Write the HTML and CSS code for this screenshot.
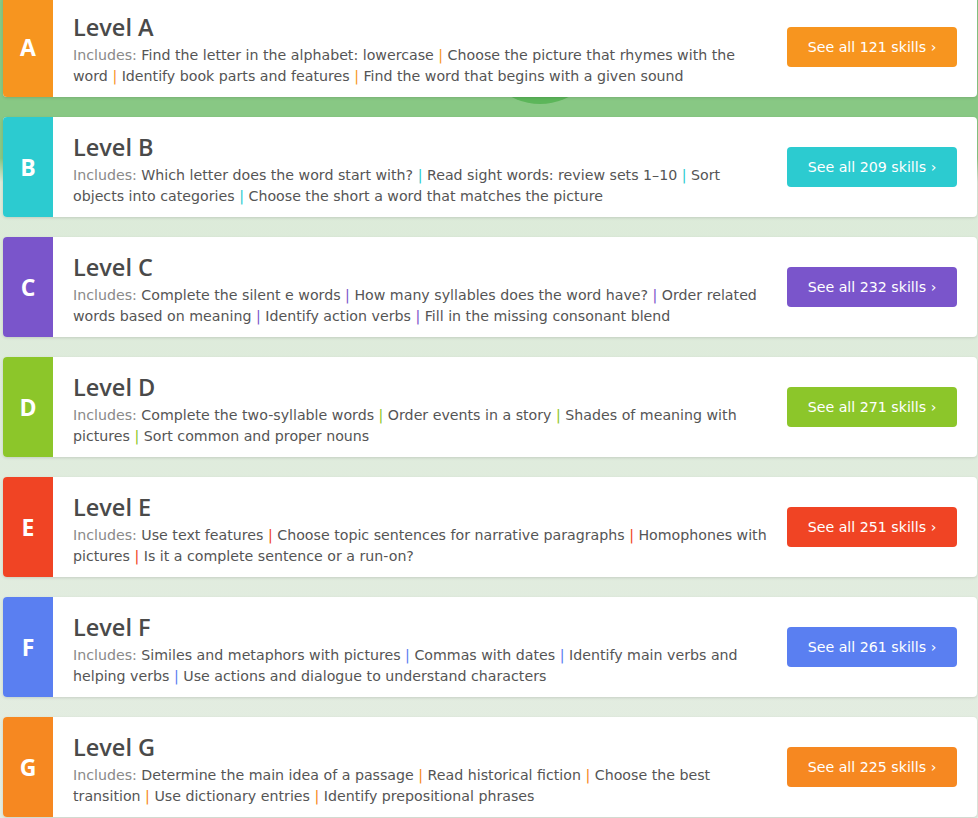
FILE: index.html
```html
<!doctype html>
<html lang="en">
<head>
  <meta charset="utf-8" />
  <title>Reading levels</title>
  <link rel="stylesheet" href="styles.css">
</head>
<body>
  <div class="hero-blob"></div>

  <div class="levels">
    <!-- Level A -->
    <div class="level lv-a">
      <div class="badge">A</div>
      <div class="info">
        <h2>Level A</h2>
        <p><span class="inc">Includes:</span> Find the letter in the alphabet: lowercase <span class="sep">|</span> Choose the picture that rhymes with the word <span class="sep">|</span> Identify book parts and features <span class="sep">|</span> Find the word that begins with a given sound</p>
      </div>
      <a class="see" href="#">See all 121 skills ›</a>
    </div>

    <!-- Level B -->
    <div class="level lv-b">
      <div class="badge">B</div>
      <div class="info">
        <h2>Level B</h2>
        <p><span class="inc">Includes:</span> Which letter does the word start with? <span class="sep">|</span> Read sight words: review sets 1–10 <span class="sep">|</span> Sort objects into categories <span class="sep">|</span> Choose the short a word that matches the picture</p>
      </div>
      <a class="see" href="#">See all 209 skills ›</a>
    </div>

    <!-- Level C -->
    <div class="level lv-c">
      <div class="badge">C</div>
      <div class="info">
        <h2>Level C</h2>
        <p><span class="inc">Includes:</span> Complete the silent e words <span class="sep">|</span> How many syllables does the word have? <span class="sep">|</span> Order related words based on meaning <span class="sep">|</span> Identify action verbs <span class="sep">|</span> Fill in the missing consonant blend</p>
      </div>
      <a class="see" href="#">See all 232 skills ›</a>
    </div>

    <!-- Level D -->
    <div class="level lv-d">
      <div class="badge">D</div>
      <div class="info">
        <h2>Level D</h2>
        <p><span class="inc">Includes:</span> Complete the two-syllable words <span class="sep">|</span> Order events in a story <span class="sep">|</span> Shades of meaning with pictures <span class="sep">|</span> Sort common and proper nouns</p>
      </div>
      <a class="see" href="#">See all 271 skills ›</a>
    </div>

    <!-- Level E -->
    <div class="level lv-e">
      <div class="badge">E</div>
      <div class="info">
        <h2>Level E</h2>
        <p><span class="inc">Includes:</span> Use text features <span class="sep">|</span> Choose topic sentences for narrative paragraphs <span class="sep">|</span> Homophones with pictures <span class="sep">|</span> Is it a complete sentence or a run-on?</p>
      </div>
      <a class="see" href="#">See all 251 skills ›</a>
    </div>

    <!-- Level F -->
    <div class="level lv-f">
      <div class="badge">F</div>
      <div class="info">
        <h2>Level F</h2>
        <p><span class="inc">Includes:</span> Similes and metaphors with pictures <span class="sep">|</span> Commas with dates <span class="sep">|</span> Identify main verbs and helping verbs <span class="sep">|</span> Use actions and dialogue to understand characters</p>
      </div>
      <a class="see" href="#">See all 261 skills ›</a>
    </div>

    <!-- Level G -->
    <div class="level lv-g">
      <div class="badge">G</div>
      <div class="info">
        <h2>Level G</h2>
        <p><span class="inc">Includes:</span> Determine the main idea of a passage <span class="sep">|</span> Read historical fiction <span class="sep">|</span> Choose the best transition <span class="sep">|</span> Use dictionary entries <span class="sep">|</span> Identify prepositional phrases</p>
      </div>
      <a class="see" href="#">See all 225 skills ›</a>
    </div>
  </div>
</body>
</html>
```

FILE: styles.css
```css
html, body { margin:0; padding:0; }
body {
  position:relative;
  min-height:818px;
  overflow:hidden;
  font-family:"DejaVu Sans", Verdana, sans-serif;
  background:linear-gradient(to bottom, #88c884 0, #88c884 158px, #dcebd9 182px, #e4ede2 100%);
}
/* darker green circle peeking out from the header art */
.hero-blob {
  position:absolute; left:478px; top:-20px;
  width:124px; height:124px; border-radius:50%;
  background:#5cb65a;
}
.levels {
  position:relative;
  display:flex; flex-direction:column; gap:20px;
  margin:-3px 1px 0 3px;
}
.level {
  display:flex; align-items:stretch;
  height:100px;
  background:white; border-radius:4px;
  box-shadow:0 1px 3px rgba(0,0,0,0.12);
  overflow:hidden;
}
.badge {
  flex:0 0 50px;
  display:flex; align-items:center; justify-content:center;
  color:white; font-size:23px; font-weight:bold;
  font-family:"Open Sans", sans-serif;
}
.info { flex:1; padding:15px 20px 0 20px; min-width:0; }
.info h2 {
  margin:0; font-family:"Open Sans", sans-serif; font-weight:600;
  font-size:23.5px; line-height:30px; color:#4a4a4a;
}
.info p {
  margin:3px 0 0; font-size:14.2px; line-height:21px; color:#555;
  max-width:697px;
}
.inc { color:#8a8a8a; }
.see {
  align-self:center; flex:0 0 170px;
  margin-right:20px;
  height:40px; line-height:40px; border-radius:4px;
  text-align:center; color:white; text-decoration:none;
  font-size:14.2px;
}
.lv-a .badge, .lv-a .see { background:#f7951f; }
.lv-a .sep { color:#f7951f; }
.lv-b .badge, .lv-b .see { background:#2ccbd0; }
.lv-b .sep { color:#2ccbd0; }
.lv-c .badge, .lv-c .see { background:#7a55cb; }
.lv-c .sep { color:#7a55cb; }
.lv-d .badge, .lv-d .see { background:#8cc62a; }
.lv-d .sep { color:#8cc62a; }
.lv-e .badge, .lv-e .see { background:#f04424; }
.lv-e .sep { color:#f04424; }
.lv-f .badge, .lv-f .see { background:#5a7ff1; }
.lv-f .sep { color:#5a7ff1; }
.lv-g .badge, .lv-g .see { background:#f68821; }
.lv-g .sep { color:#f68821; }
```
